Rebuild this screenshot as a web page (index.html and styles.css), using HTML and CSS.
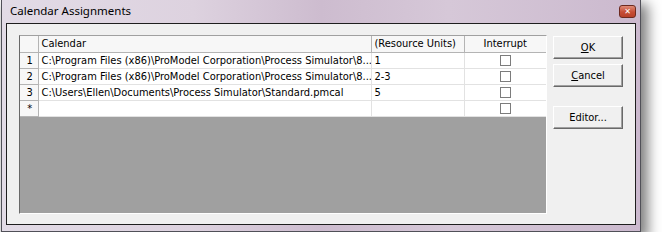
FILE: index.html
```html
<!DOCTYPE html>
<html lang="en">
<head>
  <meta charset="UTF-8">
  <title>Calendar Assignments</title>
  <link rel="stylesheet" href="styles.css">
</head>
<body>
  <div class="window">
    <div class="titlebar">
      <span class="title">Calendar Assignments</span>
      <span class="close">&#x2715;</span>
    </div>
    <div class="client">
      <div class="grid">
        <table>
          <thead>
            <tr>
              <th class="rowhead"></th>
              <th class="col-cal">Calendar</th>
              <th class="col-units">(Resource Units)</th>
              <th class="col-int">Interrupt</th>
            </tr>
          </thead>
          <tbody>
            <tr>
              <td class="rowhead">1</td>
              <td>C:\Program Files (x86)\ProModel Corporation\Process Simulator\8...</td>
              <td>1</td>
              <td class="check"><span class="box"></span></td>
            </tr>
            <tr>
              <td class="rowhead">2</td>
              <td>C:\Program Files (x86)\ProModel Corporation\Process Simulator\8...</td>
              <td>2-3</td>
              <td class="check"><span class="box"></span></td>
            </tr>
            <tr>
              <td class="rowhead">3</td>
              <td>C:\Users\Ellen\Documents\Process Simulator\Standard.pmcal</td>
              <td>5</td>
              <td class="check"><span class="box"></span></td>
            </tr>
            <tr>
              <td class="rowhead">*</td>
              <td></td>
              <td></td>
              <td class="check"><span class="box"></span></td>
            </tr>
          </tbody>
        </table>
      </div>
      <div class="buttons">
        <button><u>O</u>K</button>
        <button><u>C</u>ancel</button>
        <button class="editor">Editor...</button>
      </div>
    </div>
  </div>
</body>
</html>
```

FILE: styles.css
```css
* { margin: 0; padding: 0; box-sizing: border-box; }
body { background: #fff; font-family: "DejaVu Sans Condensed", Tahoma, sans-serif; font-size: 11px; color: #000; }

.window {
  margin-left: 1px;
  width: 640px; height: 232px;
  border: 1px solid #505058; border-top: none;
  background: linear-gradient(90deg, #e2dbe6 0%, #ddd2df 30%, #cdbccf 50%, #d6c8d8 70%, #cbb9ce 100%);
  padding: 0 4px 6px 4px;
  box-shadow: 5px 6px 12px 2px rgba(0,0,0,0.5);
  display: flex; flex-direction: column;
}
.titlebar {
  height: 23px; display: flex; align-items: flex-start; justify-content: space-between;
}
.title { font-family: "Noto Sans", sans-serif; font-size: 11.5px; padding: 3px 0 0 4px; color: #000; }
.close {
  margin: 5px 0 0 0; width: 17px; height: 13px;
  background: linear-gradient(#e08a78, #c64d36 55%, #b8402a);
  border: 1px solid #6d2a20; border-radius: 3px;
  color: #fff; font-size: 8px; font-weight: bold; line-height: 11px; text-align: center;
  font-family: "DejaVu Sans", sans-serif;
}

.client {
  flex: 1; background: #f0f0f0; border: 1px solid #1e1e1e;
  display: flex; padding: 11px 10px 0 12px; gap: 6px;
}
.grid {
  width: 528px; height: 179px; background: #a0a0a0;
  border: 1px solid; border-color: #a0a0a0 #fff #fff #696969;
}
table { border-collapse: collapse; width: 526px; table-layout: fixed; background: #fff; }
th, td {
  height: 16px; padding: 0 3px; white-space: nowrap; overflow: hidden;
  font-weight: normal; text-align: left; line-height: 15px;
  border: 1px solid #e2e2e2;
}
th { background: #f7f7f7; border-color: #b4b4b4; border-top: none; }
th:first-child, td:first-child { border-left: none; }
.rowhead { width: 18px; background: #f7f7f7; border-color: #b4b4b4; text-align: center; padding: 0 0 0 2px; }
.col-cal { width: 333px; }
.col-units { width: 93px; }
.col-int { width: 82px; text-align: center; }
th:last-child, td:last-child { border-right: none; }
.check { text-align: center; }
.box { display: inline-block; width: 11px; height: 11px; border: 1px solid #7c7c7c; background: #fff; vertical-align: -2px; }

.buttons { display: flex; flex-direction: column; gap: 5px; padding-top: 1px; }
button {
  width: 70px; height: 23px; background: #f0f0f0;
  border: 1px solid; border-color: #fff #696969 #696969 #fff;
  box-shadow: inset -1px -1px #a0a0a0;
  font-family: "DejaVu Sans Condensed", Tahoma, sans-serif; font-size: 11px; color: #000;
}
.editor { margin-top: 14px; }
```
